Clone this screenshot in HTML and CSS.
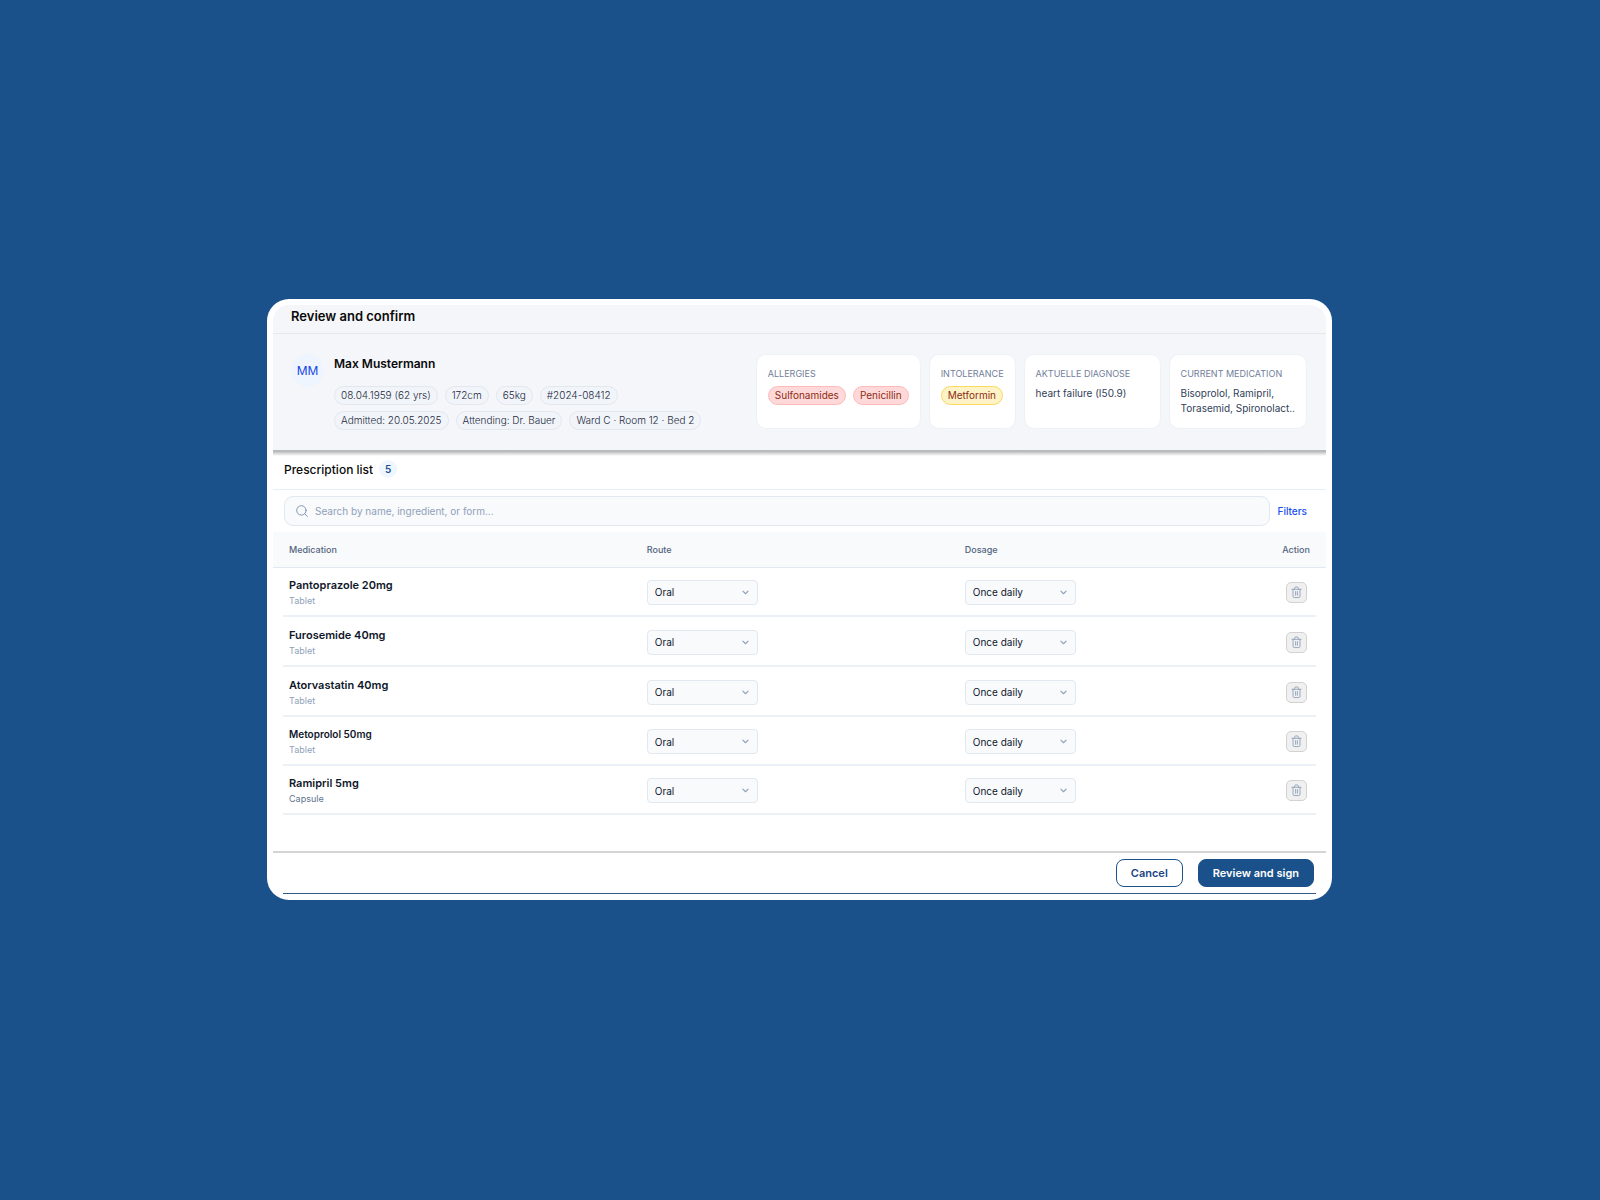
FILE: index.html
```html
<!DOCTYPE html>
<html lang="en">
  <head>
    <meta charset="UTF-8" />
    <meta name="viewport" content="width=device-width, initial-scale=1.0" />
    <title>Review and confirm</title>
    <link rel="stylesheet" href="styles.css">
  </head>
  <body>
    <!-- Shared icons -->
    <svg class="sprite" aria-hidden="true">
      <symbol id="chevron" viewBox="0 0 8 8">
        <path d="M1.7 2.8 4 5.1l2.3-2.3" />
      </symbol>
      <symbol id="trash" viewBox="0 0 12 14">
        <path d="M1 3.5h10M4 3.5V2.2C4 1.5 4.4 1 5 1h2c.6 0 1 .5 1 1.2v1.3M2.2 3.5v7.7c0 .8.5 1.3 1.3 1.3h5c.8 0 1.3-.5 1.3-1.3V3.5M5 6v4M7 6v4" />
      </symbol>
    </svg>

    <main class="dialog">
      <header class="dialog-header">
        <h1>Review and confirm</h1>
      </header>

      <section class="patient">
        <div class="avatar">MM</div>
        <div class="patient-info">
          <h2>Max Mustermann</h2>
          <div class="chips">
            <span class="chip">08.04.1959 (62 yrs)</span>
            <span class="chip">172cm</span>
            <span class="chip">65kg</span>
            <span class="chip">#2024-08412</span>
          </div>
          <div class="chips">
            <span class="chip">Admitted: 20.05.2025</span>
            <span class="chip">Attending: Dr. Bauer</span>
            <span class="chip">Ward C · Room 12 · Bed 2</span>
          </div>
        </div>
        <div class="facts">
          <div class="fact">
            <h3>ALLERGIES</h3>
            <div class="chips">
              <span class="chip chip-red">Sulfonamides</span>
              <span class="chip chip-red">Penicillin</span>
            </div>
          </div>
          <div class="fact">
            <h3>INTOLERANCE</h3>
            <div class="chips">
              <span class="chip chip-yellow">Metformin</span>
            </div>
          </div>
          <div class="fact fact-wide">
            <h3>AKTUELLE DIAGNOSE</h3>
            <p>heart failure (I50.9)</p>
          </div>
          <div class="fact fact-wide">
            <h3>CURRENT MEDICATION</h3>
            <p>Bisoprolol, Ramipril,<br />Torasemid, Spironolact..</p>
          </div>
        </div>
      </section>

      <section class="prescriptions">
        <div class="list-header">
          <h2>Prescription list</h2>
          <span class="count">5</span>
        </div>

        <div class="toolbar">
          <label class="search">
            <svg viewBox="0 0 12 12" aria-hidden="true">
              <circle cx="5.4" cy="5.4" r="4.7" />
              <path d="m8.9 8.9 2.5 2.5" />
            </svg>
            <input type="search" aria-label="Search" placeholder="Search by name, ingredient, or form..." />
          </label>
          <a href="#" class="filters">Filters</a>
        </div>

        <table>
          <thead>
            <tr>
              <th class="col-med">Medication</th>
              <th class="col-route">Route</th>
              <th>Dosage</th>
              <th class="col-action">Action</th>
            </tr>
          </thead>
          <tbody>
            <tr>
              <td><strong>Pantoprazole 20mg</strong><small>Tablet</small></td>
              <td>
                <div class="select">
                  <select aria-label="Route for Pantoprazole"><option>Oral</option></select>
                  <svg><use href="#chevron" /></svg>
                </div>
              </td>
              <td>
                <div class="select">
                  <select aria-label="Dosage for Pantoprazole"><option>Once daily</option></select>
                  <svg><use href="#chevron" /></svg>
                </div>
              </td>
              <td class="col-action">
                <button class="delete" aria-label="Remove Pantoprazole"><svg><use href="#trash" /></svg></button>
              </td>
            </tr>
            <tr>
              <td><strong>Furosemide 40mg</strong><small>Tablet</small></td>
              <td>
                <div class="select">
                  <select aria-label="Route for Furosemide"><option>Oral</option></select>
                  <svg><use href="#chevron" /></svg>
                </div>
              </td>
              <td>
                <div class="select">
                  <select aria-label="Dosage for Furosemide"><option>Once daily</option></select>
                  <svg><use href="#chevron" /></svg>
                </div>
              </td>
              <td class="col-action">
                <button class="delete" aria-label="Remove Furosemide"><svg><use href="#trash" /></svg></button>
              </td>
            </tr>
            <tr>
              <td><strong>Atorvastatin 40mg</strong><small>Tablet</small></td>
              <td>
                <div class="select">
                  <select aria-label="Route for Atorvastatin"><option>Oral</option></select>
                  <svg><use href="#chevron" /></svg>
                </div>
              </td>
              <td>
                <div class="select">
                  <select aria-label="Dosage for Atorvastatin"><option>Once daily</option></select>
                  <svg><use href="#chevron" /></svg>
                </div>
              </td>
              <td class="col-action">
                <button class="delete" aria-label="Remove Atorvastatin"><svg><use href="#trash" /></svg></button>
              </td>
            </tr>
            <tr class="compact">
              <td><strong>Metoprolol 50mg</strong><small>Tablet</small></td>
              <td>
                <div class="select">
                  <select aria-label="Route for Metoprolol"><option>Oral</option></select>
                  <svg><use href="#chevron" /></svg>
                </div>
              </td>
              <td>
                <div class="select">
                  <select aria-label="Dosage for Metoprolol"><option>Once daily</option></select>
                  <svg><use href="#chevron" /></svg>
                </div>
              </td>
              <td class="col-action">
                <button class="delete" aria-label="Remove Metoprolol"><svg><use href="#trash" /></svg></button>
              </td>
            </tr>
            <tr>
              <td><strong>Ramipril 5mg</strong><small class="dark">Capsule</small></td>
              <td>
                <div class="select">
                  <select aria-label="Route for Ramipril"><option>Oral</option></select>
                  <svg><use href="#chevron" /></svg>
                </div>
              </td>
              <td>
                <div class="select">
                  <select aria-label="Dosage for Ramipril"><option>Once daily</option></select>
                  <svg><use href="#chevron" /></svg>
                </div>
              </td>
              <td class="col-action">
                <button class="delete" aria-label="Remove Ramipril"><svg><use href="#trash" /></svg></button>
              </td>
            </tr>
          </tbody>
        </table>
      </section>

      <footer class="dialog-footer">
        <button class="btn btn-outline">Cancel</button>
        <button class="btn btn-primary">Review and sign</button>
      </footer>
    </main>
  </body>
</html>
```
FILE: styles.css
```css
* {
  box-sizing: border-box;
}

body {
  margin: 0;
  min-height: 100vh;
  padding: 0 1px 1px 0;
  display: flex;
  align-items: center;
  justify-content: center;
  background-color: #1b518a;
  color: #0a0a0a;
  font-family: Inter, "Liberation Sans", sans-serif;
  font-size: 10px;
}

h1,
h2,
h3,
p {
  margin: 0;
}

button,
select,
input {
  font-family: inherit;
}

.sprite {
  position: absolute;
  width: 0;
  height: 0;
}

svg {
  fill: none;
  stroke: currentColor;
  stroke-linecap: round;
  stroke-linejoin: round;
}

.dialog {
  width: 100%;
  max-width: 1065px;
  padding: 6px;
  background: #fff;
  border-radius: 22px;
}

.dialog-header {
  padding: 1px 18px 6px;
  background: #f5f6fa;
  border-bottom: 1px solid #e5e9ee;
  border-radius: 16px 16px 0 0;
}

.dialog-header h1 {
  font-size: 13px;
  font-weight: 600;
  line-height: 21px;
}

/* Patient banner */
.patient {
  display: flex;
  align-items: flex-start;
  padding: 20px 19px 20px 18px;
  background: #f5f6fa;
}

.avatar {
  width: 33px;
  height: 33px;
  margin-right: 10px;
  border-radius: 50%;
  background: #eef5fe;
  color: #1447e6;
  font-size: 12px;
  font-weight: 400;
  line-height: 33px;
  text-align: center;
}

.patient-info {
  flex: 1;
}

.patient-info h2 {
  margin-bottom: 12px;
  font-size: 12px;
  font-weight: 600;
  line-height: 20px;
}

.chips {
  display: flex;
  gap: 7px;
}

.chips + .chips {
  margin-top: 6px;
}

.chip {
  padding: 0 6px;
  border: 1px solid #e2e8f0;
  border-radius: 10px;
  background: #f1f5f9;
  color: #1d293d;
  font-size: 10px;
  font-weight: 300;
  line-height: 17px;
  white-space: nowrap;
}

.chip-red {
  border-color: #ffb9b9;
  background: #ffd9d9;
  color: #8b2c12;
  font-weight: 400;
}

.chip-yellow {
  border-color: #fbd95f;
  background: #fef3c6;
  color: #8b2c12;
  font-weight: 400;
}

.facts {
  display: flex;
  gap: 8px;
}

.fact {
  min-height: 75px;
  padding: 12px 11px;
  border: 1px solid #eff1f6;
  border-radius: 10px;
  background: #fff;
}

.fact-wide {
  min-width: 137px;
}

.fact h3 {
  margin-bottom: 5px;
  color: #71809a;
  font-size: 9px;
  font-weight: 400;
  line-height: 14px;
}

.fact p {
  color: #314158;
  font-size: 10px;
  line-height: 15px;
}

/* Prescription list */
.prescriptions {
  padding-bottom: 36px;
  border-top: 2px solid #b9babd;
  border-bottom: 2px solid #d4d4d4;
  background: linear-gradient(#c4c4c4, #fff) top / 100% 4px no-repeat;
}

.list-header {
  display: flex;
  align-items: center;
  gap: 6px;
  padding: 8px 11px 11px;
  border-bottom: 1px solid #e8eef5;
}

.list-header h2 {
  font-size: 12px;
  font-weight: 500;
}

.count {
  width: 18px;
  border-radius: 50%;
  background: #eff6ff;
  color: #1b4f8c;
  font-size: 10px;
  font-weight: 600;
  line-height: 18px;
  text-align: center;
}

.toolbar {
  display: flex;
  align-items: center;
  gap: 7px;
  padding: 6px 19px 6px 11px;
}

.search {
  flex: 1;
  display: flex;
  align-items: center;
  gap: 7px;
  height: 30px;
  padding: 0 11px;
  border: 1px solid #e2e8f0;
  border-radius: 9px;
  background: #f8fafc;
}

.search svg {
  width: 12px;
  height: 12px;
  color: #8296b3;
}

.search input {
  flex: 1;
  padding: 0;
  border: 0;
  outline: 0;
  background: none;
  font-size: 10px;
}

.search input::placeholder {
  color: #90a1b9;
}

.filters {
  color: #1550f0;
  font-size: 10px;
  font-weight: 500;
  text-decoration: none;
}

table {
  width: 100%;
  border-collapse: collapse;
  table-layout: fixed;
}

thead tr {
  height: 35px;
  background: #f8fafc;
  border-bottom: 1px solid #e2e8f0;
}

th {
  padding: 0;
  color: #53647e;
  font-size: 9px;
  font-weight: 500;
  text-align: left;
}

/* row divider stops short of both edges */
tbody tr {
  height: 50px;
  background: linear-gradient(#ecf1f7, #ecf1f7) bottom / calc(100% - 20px) 2px no-repeat;
}

tbody tr:nth-child(n + 4) {
  height: 49px;
}

td {
  padding: 0;
}

th:first-child,
td:first-child {
  padding-left: 16px;
}

.col-med {
  width: 35.5%;
}

.col-route {
  width: 30.2%;
}

.col-action {
  width: 60px;
  text-align: center;
}

td strong,
td small {
  display: block;
}

td strong {
  color: #0f172b;
  font-size: 11px;
  font-weight: 600;
  line-height: 16px;
}

td small {
  color: #90a1b9;
  font-size: 9px;
  line-height: 15px;
}

td small.dark {
  color: #62748e;
}

.compact strong {
  font-size: 10px;
}

.select {
  position: relative;
  width: 111px;
}

.select select {
  display: block;
  width: 100%;
  height: 25px;
  padding: 0 7px;
  appearance: none;
  border: 1px solid #e2e8f0;
  border-radius: 4px;
  background: #f8fafc;
  color: #0f172b;
  font-size: 10px;
}

.select svg {
  position: absolute;
  top: 8px;
  right: 8px;
  width: 9px;
  height: 9px;
  color: #90a1b9;
  pointer-events: none;
}

.delete {
  display: inline-flex;
  align-items: center;
  justify-content: center;
  width: 21px;
  height: 21px;
  padding: 0;
  border: 1px solid #d2d2d2;
  border-radius: 5px;
  background: #f0f0f0;
  color: #90a1b9;
  vertical-align: middle;
}

.delete svg {
  width: 11px;
  height: 13px;
}

/* Footer */
.dialog-footer {
  display: flex;
  justify-content: flex-end;
  gap: 15px;
  margin: 0 10px;
  padding: 6px 2px;
  border-bottom: 1px solid #335b85;
}

.btn {
  height: 28px;
  padding: 0 14px;
  border: 1px solid #1b518a;
  border-radius: 8px;
  font-size: 11px;
  font-weight: 600;
}

.btn-outline {
  background: #fff;
  color: #1b4584;
}

.btn-primary {
  background: #1b518a;
  color: #fff;
}
```
